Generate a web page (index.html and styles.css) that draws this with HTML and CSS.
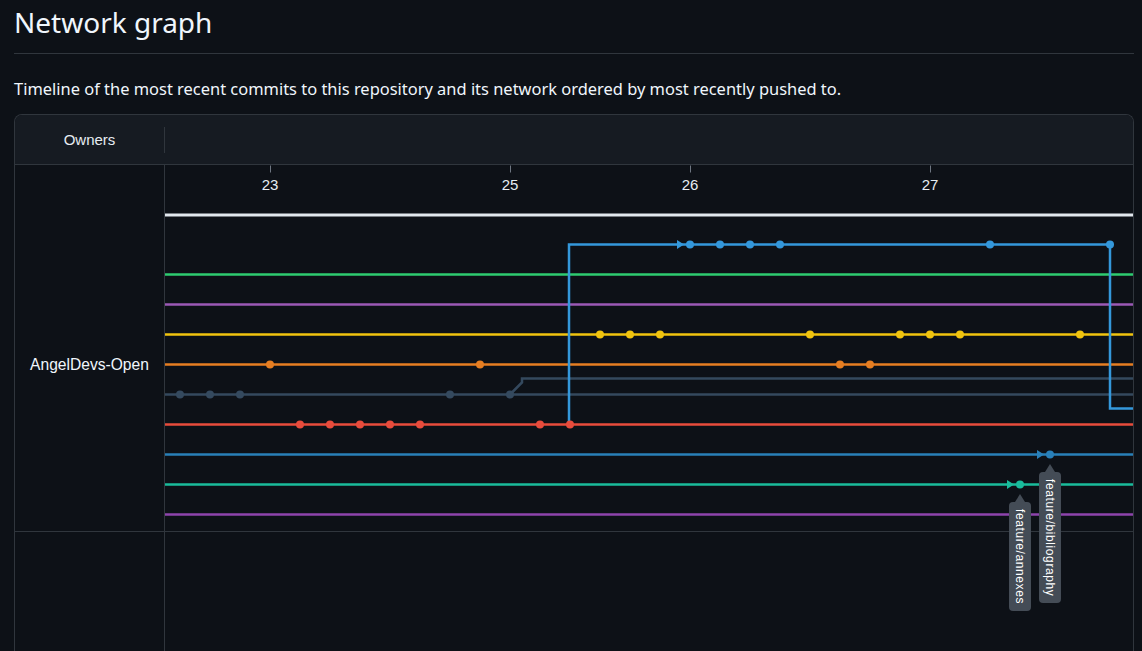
FILE: index.html
```html
<!DOCTYPE html>
<html lang="en">
<head>
<meta charset="utf-8">
<title>Network graph</title>
<link rel="stylesheet" href="styles.css">
</head>
<body>
<div class="page">
  <h1 class="title">Network graph</h1>
  <p class="desc">Timeline of the most recent commits to this repository and its network ordered by most recently pushed to.</p>
  <div class="network">
    <div class="net-head">
      <div class="owners-head">Owners</div>
      <div class="head-rest"></div>
    </div>
    <div class="net-body">
      <div class="owners-col">
        <div class="owner-row">AngelDevs-Open</div>
        <div class="owner-empty"></div>
      </div>
      <div class="canvas">
        <svg class="graph" width="968" height="486" viewBox="165 164.5 968 486" xmlns="http://www.w3.org/2000/svg">
          <g class="ticks" stroke="#6e7681" stroke-width="1">
            <line x1="270.5" y1="165" x2="270.5" y2="172"/>
            <line x1="510.5" y1="165" x2="510.5" y2="172"/>
            <line x1="690.5" y1="165" x2="690.5" y2="172"/>
            <line x1="930.5" y1="165" x2="930.5" y2="172"/>
          </g>
          <g class="dates" fill="#e6edf3" font-family="'Liberation Sans', Arial, sans-serif" font-size="15" text-anchor="middle">
            <text x="270" y="189">23</text>
            <text x="510" y="189">25</text>
            <text x="690" y="189">26</text>
            <text x="930" y="189">27</text>
          </g>
          <line x1="165" y1="531" x2="1133" y2="531" stroke="#30363d" stroke-width="1"/>
          <line x1="165" y1="214.5" x2="1133" y2="214.5" stroke="#e2e8ee" stroke-width="3"/>

          <g fill="none" stroke-width="2.5">
            <line x1="165" y1="274" x2="1133" y2="274" stroke="#2ecc71"/>
            <line x1="165" y1="304" x2="1133" y2="304" stroke="#9b59b6"/>
            <line x1="165" y1="334" x2="1133" y2="334" stroke="#f1c40f"/>
            <line x1="165" y1="364" x2="1133" y2="364" stroke="#e67e22"/>
            <line x1="165" y1="394" x2="1133" y2="394" stroke="#34495e"/>
            <polyline points="510,394 522,382 522,378 1133,378" stroke="#34495e"/>
            <line x1="165" y1="424" x2="1133" y2="424" stroke="#e74c3c"/>
            <line x1="165" y1="454" x2="1133" y2="454" stroke="#2980b9"/>
            <line x1="165" y1="484" x2="1133" y2="484" stroke="#1abc9c"/>
            <line x1="165" y1="514" x2="1133" y2="514" stroke="#8e44ad"/>
            <polyline points="569,424 569,244 1110,244 1110,408 1133,408" stroke="#3498db"/>
          </g>

          <polygon points="677,239.5 684,244 677,248.5" fill="#3498db"/>
          <polygon points="1037,449.5 1044,454 1037,458.5" fill="#2980b9"/>
          <polygon points="1007,479.5 1014,484 1007,488.5" fill="#1abc9c"/>

          <g fill="#3498db">
            <circle cx="690" cy="244" r="4"/>
            <circle cx="720" cy="244" r="4"/>
            <circle cx="750" cy="244" r="4"/>
            <circle cx="780" cy="244" r="4"/>
            <circle cx="990" cy="244" r="4"/>
            <circle cx="1110" cy="244" r="4"/>
          </g>
          <g fill="#f1c40f">
            <circle cx="600" cy="334" r="4"/>
            <circle cx="630" cy="334" r="4"/>
            <circle cx="660" cy="334" r="4"/>
            <circle cx="810" cy="334" r="4"/>
            <circle cx="900" cy="334" r="4"/>
            <circle cx="930" cy="334" r="4"/>
            <circle cx="960" cy="334" r="4"/>
            <circle cx="1080" cy="334" r="4"/>
          </g>
          <g fill="#e67e22">
            <circle cx="270" cy="364" r="4"/>
            <circle cx="480" cy="364" r="4"/>
            <circle cx="840" cy="364" r="4"/>
            <circle cx="870" cy="364" r="4"/>
          </g>
          <g fill="#34495e">
            <circle cx="180" cy="394" r="4"/>
            <circle cx="210" cy="394" r="4"/>
            <circle cx="240" cy="394" r="4"/>
            <circle cx="450" cy="394" r="4"/>
            <circle cx="510" cy="394" r="4"/>
          </g>
          <g fill="#e74c3c">
            <circle cx="300" cy="424" r="4"/>
            <circle cx="330" cy="424" r="4"/>
            <circle cx="360" cy="424" r="4"/>
            <circle cx="390" cy="424" r="4"/>
            <circle cx="420" cy="424" r="4"/>
            <circle cx="540" cy="424" r="4"/>
            <circle cx="570" cy="424" r="4"/>
          </g>
          <circle cx="1050" cy="454" r="4" fill="#2980b9"/>
          <circle cx="1020" cy="484" r="4" fill="#1abc9c"/>
        </svg>
        <div class="ref-label label-annexes">feature/annexes</div>
        <div class="ref-label label-biblio">feature/bibliography</div>
      </div>
    </div>
  </div>
</div>
</body>
</html>
```

FILE: styles.css
```css
html, body {
  margin: 0;
  padding: 0;
  background: #0d1117;
  color: #e6edf3;
}

body {
  font-family: "Noto Sans", "Open Sans", sans-serif;
  overflow: hidden;
}

.page {
  padding: 0 8px 0 14px;
  width: 1120px;
}

.title {
  margin: 0;
  padding: 4px 0 13px;
  font-size: 28px;
  font-weight: 400;
  line-height: 36px;
  color: #f0f6fc;
  border-bottom: 1px solid #30363d;
}

.desc {
  margin: 23px 0 13px;
  font-size: 16.45px;
  line-height: 24px;
  color: #f0f6fc;
}

.network {
  border: 1px solid #30363d;
  border-bottom: 0;
  border-radius: 8px 8px 0 0;
  overflow: hidden;
  font-family: "Liberation Sans", Arial, sans-serif;
}

.net-head {
  display: flex;
  align-items: center;
  height: 49px;
  background: #161b22;
  border-bottom: 1px solid #30363d;
}

.owners-head {
  width: 149px;
  height: 26px;
  line-height: 26px;
  text-align: center;
  font-size: 15px;
  color: #e6edf3;
  border-right: 1px solid #30363d;
}

.head-rest {
  flex: 1;
}

.net-body {
  display: flex;
  height: 486px;
}

.owners-col {
  width: 149px;
  border-right: 1px solid #30363d;
  display: flex;
  flex-direction: column;
}

.owner-row {
  height: 176px;
  padding-top: 190px;
  line-height: 20px;
  text-align: center;
  font-size: 15.6px;
  color: #f0f6fc;
  border-bottom: 1px solid #30363d;
}

.owner-empty {
  flex: 1;
}

.canvas {
  position: relative;
  width: 968px;
}

.graph {
  display: block;
}

.ref-label {
  position: absolute;
  writing-mode: vertical-rl;
  background: #444c56;
  color: #ffffff;
  font-size: 12px;
  letter-spacing: 0.6px;
  line-height: 22px;
  width: 22px;
  border-radius: 4px;
  text-align: center;
}

.ref-label::before {
  content: "";
  position: absolute;
  top: -8px;
  left: 6px;
  border-left: 5px solid transparent;
  border-right: 5px solid transparent;
  border-bottom: 8px solid #444c56;
}

.label-annexes {
  left: 844px;
  top: 337px;
  height: 109px;
}

.label-biblio {
  left: 874px;
  top: 307px;
  height: 131px;
}
```
